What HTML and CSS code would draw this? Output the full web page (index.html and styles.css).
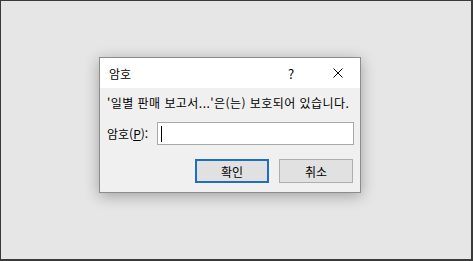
FILE: index.html
```html
<!DOCTYPE html>
<html lang="ko">
<head>
  <meta charset="UTF-8" />
  <title>암호</title>
  <link rel="stylesheet" href="styles.css">
</head>
<body>
  <div class="dialog">
    <div class="titlebar">
      <span class="title">암호</span>
      <span class="help">?</span>
      <span class="close">
        <svg width="10" height="10" viewBox="0 0 10 10">
          <path d="M0.5 0.5 L9.5 9.5 M9.5 0.5 L0.5 9.5" stroke="#000" stroke-width="1" fill="none" />
        </svg>
      </span>
    </div>
    <div class="content">
      <div class="message">'일별 판매 보고서...'은(는) 보호되어 있습니다.</div>
      <div class="field">
        <label for="pw">암호(<u>P</u>):</label>
        <div class="input"><span class="caret"></span></div>
      </div>
      <div class="actions">
        <button class="btn btn-default">확인</button>
        <button class="btn">취소</button>
      </div>
    </div>
  </div>
</body>
</html>
```

FILE: styles.css
```css
html, body {
  margin: 0;
  height: 100%;
}

body {
  box-sizing: border-box;
  background: #e6e6e6;
  border-style: solid;
  border-color: #3a3a3a;
  border-width: 1px 2px 2px 1px;
  font-family: "Noto Sans CJK KR", "Noto Sans", sans-serif;
  font-size: 12px;
  color: #000;
  overflow: hidden;
}

.dialog {
  width: 262px;
  height: 136px;
  box-sizing: border-box;
  margin: 56px 0 0 98px;
  background: #f0f0f0;
  border: 1px solid #8c8c8c;
  box-shadow: 0 3px 14px rgba(0, 0, 0, 0.3);
  display: flex;
  flex-direction: column;
}

.titlebar {
  height: 30px;
  background: #fff;
  display: flex;
  align-items: center;
  padding-left: 9px;
}

.title {
  flex: 1;
  font-size: 12px;
}

.help {
  width: 14px;
  font-size: 13px;
  margin-right: 31px;
}

.close {
  display: flex;
  margin-right: 17px;
}

.content {
  padding: 6px 6px 0 7px;
}

.message {
  height: 18px;
  line-height: 18px;
  white-space: nowrap;
  letter-spacing: 0.45px;
}

.field {
  display: flex;
  align-items: center;
  margin-top: 10px;
}

.field label {
  width: 50px;
}

.input {
  flex: 1;
  height: 23px;
  box-sizing: border-box;
  background: #fff;
  border: 1px solid #a9a9a9;
  display: flex;
  align-items: center;
  padding-left: 3px;
}

.caret {
  width: 1px;
  height: 16px;
  background: #000;
}

.actions {
  display: flex;
  justify-content: flex-end;
  gap: 10px;
  margin-top: 14px;
  padding-right: 1px;
}

.btn {
  width: 74px;
  height: 24px;
  box-sizing: border-box;
  background: #e1e1e1;
  border: 1px solid #adadad;
  font-family: inherit;
  font-size: 12px;
  color: #000;
  padding: 0;
}

.btn-default {
  border: 2px solid #1f6fbf;
}
```
